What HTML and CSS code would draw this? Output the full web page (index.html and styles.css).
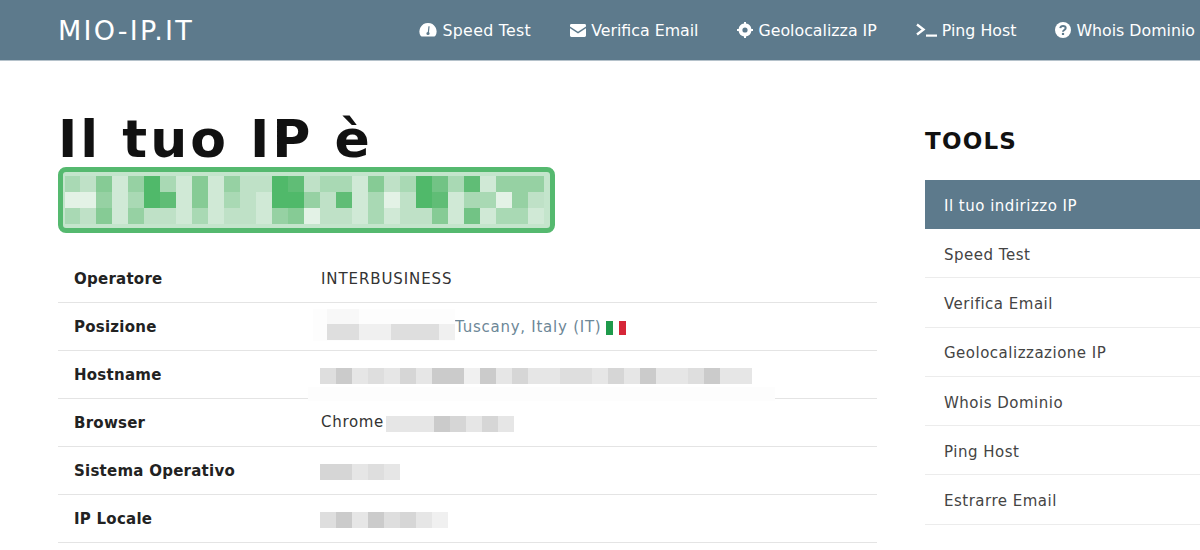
FILE: index.html
```html
<!DOCTYPE html>
<html lang="it">

<head>
    <meta charset="UTF-8">
    <meta name="viewport" content="width=device-width, initial-scale=1.0">
    <title>Il tuo IP - MIO-IP.IT</title>
    <link rel="stylesheet" href="styles.css">
</head>

<body>
    <header class="topbar">
        <a class="logo" href="#">MIO-IP.IT</a>
        <nav class="topnav">
            <a href="#">
                <svg class="nav-icon" width="18" height="16" viewBox="0 0 18 16"><path fill="#fff" fill-rule="evenodd" d="M9 1a8.500 8.500 0 0 0-7.400 12.800c.3.500.7.700 1.200.700h12.400c.500 0 .9-.2 1.200-.7A8.500 8.500 0 0 0 9 1zM10.600 4.600l-.6 5.700c.4.300.6.800.6 1.200a1.600 1.600 0 0 1-3.200 0c0-.8.600-1.500 1.400-1.600l.6-5.500c.1-.4 1.300-.2 1.200.2z"/></svg>
                Speed Test
            </a>
            <a href="#">
                <svg class="nav-icon" width="16" height="13" viewBox="0 0 16 13"><path fill="#fff" d="M0 2.500V1.400C0 .6.600 0 1.400 0h13.200c.8 0 1.400.6 1.400 1.400v1.100L8 7.800zM0 4.200l8 5.200 8-5.200v7.400c0 .8-.6 1.400-1.400 1.400H1.400C.6 13 0 12.400 0 11.600z"/></svg>
                Verifica Email
            </a>
            <a href="#">
                <svg class="nav-icon" width="16" height="16" viewBox="0 0 16 16"><path fill="#fff" fill-rule="evenodd" d="M7 0h2v1.600A6.500 6.500 0 0 1 14.400 7H16v2h-1.600A6.500 6.500 0 0 1 9 14.400V16H7v-1.600A6.500 6.500 0 0 1 1.600 9H0V7h1.600A6.500 6.500 0 0 1 7 1.600zM8 5.400a2.600 2.600 0 1 0 0 5.200 2.600 2.600 0 0 0 0-5.200z"/></svg>
                Geolocalizza IP
            </a>
            <a href="#">
                <svg class="nav-icon" width="21" height="14" viewBox="0 0 21 14"><path fill="none" stroke="#fff" stroke-width="2.400" d="M1 1.500 7.500 6.500 1 11.500"/><path fill="#fff" d="M10 11.500h11v2.200H10z"/></svg>
                Ping Host
            </a>
            <a href="#">
                <svg class="nav-icon" width="16" height="16" viewBox="0 0 16 16"><circle cx="8" cy="8" r="8" fill="#fff"/><path fill="none" stroke="#5d7a8c" stroke-width="2" d="M5.300 6.200C5.500 4.600 6.600 3.900 8 3.900c1.500 0 2.700.9 2.700 2.200 0 1.900-2.700 1.900-2.700 3.700"/><path fill="#5d7a8c" d="M6.900 10.900h2.200v2.100H6.900z"/></svg>
                Whois Dominio
            </a>
        </nav>
    </header>

    <div class="page">
        <main class="content">
            <h1>Il tuo IP è</h1>
            <div class="ip-box"></div>

            <table class="info">
                <tr>
                    <th>Operatore</th>
                    <td>INTERBUSINESS</td>
                </tr>
                <tr>
                    <th>Posizione</th>
                    <td class="place">
                        <span class="patch patch-place"></span>
                        <span class="grey-row grey-place" data-grey="2 2 0 0 2 2 2 0"></span>
                        <a href="#">Tuscany, Italy (IT)</a>
                        <span class="flag"><i class="flag-g"></i><i class="flag-w"></i><i class="flag-r"></i></span>
                    </td>
                </tr>
                <tr>
                    <th>Hostname</th>
                    <td class="hostname">
                        <span class="patch patch-host"></span>
                        <span class="grey-row" data-grey="2 4 1 2 1 3 1 4 4 0 4 1 3 1 1 2 2 1 3 1 4 1 1 2 4 1 1"></span>
                    </td>
                </tr>
                <tr>
                    <th>Browser</th>
                    <td class="browser">Chrome <span class="grey-row" data-grey="1 1 1 4 3 1 3 1"></span></td>
                </tr>
                <tr>
                    <th>Sistema Operativo</th>
                    <td><span class="grey-row" data-grey="3 3 1 2 1"></span></td>
                </tr>
                <tr>
                    <th>IP Locale</th>
                    <td><span class="grey-row" data-grey="2 4 1 4 2 3 1 0"></span></td>
                </tr>
            </table>
        </main>

        <aside class="sidebar">
            <h2>TOOLS</h2>
            <ul class="tools">
                <li class="active"><a href="#">Il tuo indirizzo IP</a></li>
                <li><a href="#">Speed Test</a></li>
                <li><a href="#">Verifica Email</a></li>
                <li><a href="#">Geolocalizzazione IP</a></li>
                <li><a href="#">Whois Dominio</a></li>
                <li><a href="#">Ping Host</a></li>
                <li><a href="#">Estrarre Email</a></li>
            </ul>
        </aside>
    </div>

    <script>
        // pixelated (censored) blocks, one digit per cell
        const greenRows = [
            '3 2 5 1 4 8 3 1 5 1 4 2 2 8 7 2 3 3 1 5 2 3 8 6 3 7 1 4 4 4',
            '0 0 4 1 3 8 7 1 5 1 3 2 1 8 8 4 2 7 1 3 0 2 8 7 1 3 3 0 4 2',
            '3 2 5 1 4 2 2 1 3 1 2 2 1 4 5 0 2 2 1 3 1 2 2 5 1 6 1 3 3 1'
        ];

        const box = document.querySelector('.ip-box');
        greenRows.forEach(function (row) {
            row.split(' ').forEach(function (shade) {
                const cell = document.createElement('span');
                cell.className = 'g' + shade;
                box.appendChild(cell);
            });
        });

        document.querySelectorAll('[data-grey]').forEach(function (row) {
            row.dataset.grey.split(' ').forEach(function (shade) {
                const cell = document.createElement('span');
                cell.className = 'k' + shade;
                row.appendChild(cell);
            });
        });
    </script>
</body>

</html>
```

FILE: styles.css
```css
body {
    font-family: "DejaVu Sans", Verdana, sans-serif;
    font-size: 15px;
    color: #333;
    margin: 0;
    background: #fff;
    overflow: hidden;
}

a {
    color: inherit;
    text-decoration: none;
}

.topbar {
    height: 61px;
    box-sizing: border-box;
    background: #5d7a8c;
    border-bottom: 1px solid #b5c2cb;
    display: flex;
    align-items: center;
    justify-content: space-between;
    padding: 0 5px 0 58px;
    color: #fff;
}

.logo {
    font-size: 27px;
    letter-spacing: 2.2px;
}

.topnav {
    display: flex;
    gap: 39px;
    font-size: 15.8px;
}

.topnav a {
    display: flex;
    align-items: center;
    gap: 5px;
}

.topnav a:first-child {
    letter-spacing: 0.3px;
}

.page {
    display: flex;
    width: 1300px;
    padding: 50px 0 0 58px;
}

.content {
    width: 819px;
    margin-right: 48px;
    flex: none;
}

h1 {
    font-size: 52px;
    line-height: 56px;
    letter-spacing: 3px;
    color: #111;
    margin: 0;
}

.ip-box {
    width: 497px;
    height: 66px;
    box-sizing: border-box;
    border: 5px solid #55b96f;
    border-radius: 8px;
    padding: 4px 2px;
    display: grid;
    grid-template-columns: 15px repeat(29, 16px);
    grid-template-rows: repeat(3, 16px);
    margin-bottom: 22px;
    background: #c4e5cc;
}

.g0 { background: #e3f2e6; }
.g1 { background: #d0e9d6; }
.g2 { background: #bfe1c7; }
.g3 { background: #a9d9b4; }
.g4 { background: #96d1a3; }
.g5 { background: #86cb95; }
.g6 { background: #72c385; }
.g7 { background: #60bd76; }
.g8 { background: #50b96a; }

.info {
    width: 100%;
    border-collapse: collapse;
}

.info th,
.info td {
    height: 47px;
    padding: 0;
    border-bottom: 1px solid #e4e4e4;
    text-align: left;
    position: relative;
}

.info th {
    width: 246px;
    padding-left: 16px;
    font-weight: bold;
    letter-spacing: 0.25px;
    color: #222;
}

.info td {
    letter-spacing: 0.9px;
    text-indent: 1px;
}

.grey-row {
    display: inline-flex;
    vertical-align: middle;
    margin: 2px 0 0 -1px;
}

.grey-row span {
    width: 16px;
    height: 16px;
}

.k0 { background: #f0f0f0; }
.k1 { background: #e6e6e6; }
.k2 { background: #dedede; }
.k3 { background: #d6d6d6; }
.k4 { background: #cbcbcb; }

.info .browser {
    letter-spacing: 0.7px;
    word-spacing: -3px;
}

.info .place {
    letter-spacing: 0.75px;
}

.place a {
    color: #6d8797;
    margin-left: 134px;
}

.grey-place {
    position: absolute;
    left: 7px;
    top: 21px;
    margin: 0;
}

/* fainter leftover of the row above the censored place */
.grey-place::before {
    content: "";
    position: absolute;
    left: 0;
    top: -15px;
    width: 32px;
    height: 15px;
    background: #f8f8f8;
}

.flag {
    display: inline-flex;
    width: 20px;
    height: 14px;
    vertical-align: -3px;
    margin-left: -1px;
}

.flag i {
    flex: 1;
}

.flag-g { background: #1f9a4b; }
.flag-w { background: #fff; }
.flag-r { background: #d62638; }

/* white smudges left around the censored values */
.patch {
    position: absolute;
    background: #fdfdfd;
}

.patch-place {
    left: -7px;
    top: 6px;
    width: 142px;
    height: 32px;
}

.patch-host {
    left: -12px;
    top: 36px;
    width: 467px;
    height: 14px;
}

.hostname .grey-row {
    position: relative;
}

.sidebar {
    width: 400px;
}

h2 {
    font-size: 23px;
    line-height: 28px;
    letter-spacing: 1.2px;
    color: #111;
    margin: 16px 0 25px;
}

.tools {
    list-style: none;
    margin: 0;
    padding: 0;
    letter-spacing: 0.5px;
}

.tools li {
    height: 49.3px;
    box-sizing: border-box;
    border-bottom: 1px solid #ececec;
    padding: 3px 0 0 19px;
    display: flex;
    align-items: center;
    color: #444;
}

.tools li.active {
    height: 49px;
    padding-top: 2px;
    background: #5d7a8c;
    border-bottom: 0;
    color: #fff;
}
```
